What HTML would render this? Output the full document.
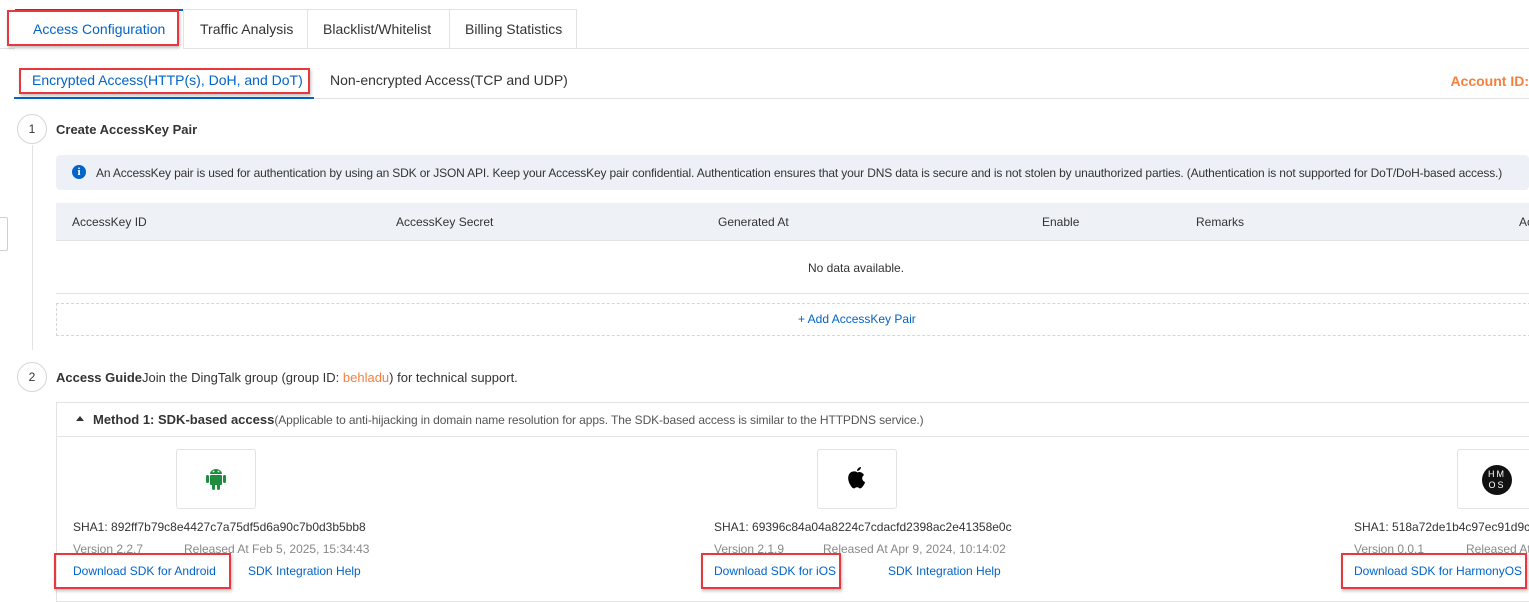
<!DOCTYPE html>
<html><head><meta charset="utf-8"><style>
*{margin:0;padding:0;box-sizing:border-box}
body{width:1529px;height:589px;overflow:hidden;background:#fff;font-family:"Liberation Sans",Arial,sans-serif;color:#333;position:relative}
.a{position:absolute;white-space:nowrap}
.red{position:absolute;border:2px solid #e8373d;box-shadow:1px 2px 3px rgba(0,0,0,.25)}
.blue{color:#0064c8}
.f12{font-size:12px}.f13{font-size:13px}
.circ{position:absolute;width:30px;height:30px;border:1px solid #d6d6d6;border-radius:50%;text-align:center;line-height:28px;font-size:12px;color:#333;background:#fff}
.ib{position:absolute;width:80px;height:60px;border:1px solid #e3e3e3;border-radius:3px}
</style></head><body>
<!-- top tabs -->
<div class="a" style="left:0;top:48px;width:1529px;height:1px;background:#e3e3e3"></div>
<div class="a" style="left:15px;top:9px;width:168px;height:40px;background:#fff;border-top:2px solid #0064c8"></div>
<div class="a" style="left:183px;top:9px;width:394px;height:39px;border:1px solid #e3e3e3;border-bottom:none"></div>
<div class="a" style="left:307px;top:9px;width:1px;height:39px;background:#e3e3e3"></div>
<div class="a" style="left:449px;top:9px;width:1px;height:39px;background:#e3e3e3"></div>
<div class="a blue" style="left:33px;top:21px;font-size:14px">Access Configuration</div>
<div class="a" style="left:200px;top:21px;font-size:14px">Traffic Analysis</div>
<div class="a" style="left:323px;top:21px;font-size:14px">Blacklist/Whitelist</div>
<div class="a" style="left:465px;top:21px;font-size:14px">Billing Statistics</div>
<div class="red" style="left:7px;top:10px;width:172px;height:36px"></div>
<!-- sub tabs -->
<div class="a" style="left:14px;top:98px;width:1515px;height:1px;background:#e3e3e3"></div>
<div class="a" style="left:14px;top:97px;width:300px;height:2px;background:#0064c8"></div>
<div class="a blue" style="left:32px;top:72px;font-size:14px">Encrypted Access(HTTP(s), DoH, and DoT)</div>
<div class="a" style="left:330px;top:72px;font-size:14px">Non-encrypted Access(TCP and UDP)</div>
<div class="red" style="left:19px;top:68px;width:291px;height:26px"></div>
<div class="a" style="right:0;top:73px;color:#f5803e;font-weight:bold;font-size:14px">Account ID:</div>
<!-- left handle -->
<div class="a" style="left:-4px;top:217px;width:12px;height:34px;border:1px solid #d0d0d0;border-radius:2px;background:#fff"></div>
<!-- step1 -->
<div class="a" style="left:32px;top:145px;width:1px;height:205px;background:#e3e3e3"></div>
<div class="circ" style="left:17px;top:114px">1</div>
<div class="a f13" style="left:56px;top:122px;font-weight:bold;color:#333">Create AccessKey Pair</div>
<div class="a" style="left:56px;top:155px;width:1473px;height:35px;background:#edf1f7;border-radius:4px"></div>
<div class="a" style="left:72px;top:165px;width:14px;height:14px;border-radius:50%;background:#0064c8;color:#fff;font-size:11px;font-weight:bold;text-align:center;line-height:14px;font-family:'Liberation Serif',serif">i</div>
<div class="a f12" style="left:96px;top:166px;letter-spacing:-0.15px">An AccessKey pair is used for authentication by using an SDK or JSON API. Keep your AccessKey pair confidential. Authentication ensures that your DNS data is secure and is not stolen by unauthorized parties. (Authentication is not supported for DoT/DoH-based access.)</div>
<div class="a" style="left:56px;top:203px;width:1473px;height:38px;background:#eef1f6;border-bottom:1px solid #e3e3e3"></div>
<div class="a f12" style="left:72px;top:215px">AccessKey ID</div>
<div class="a f12" style="left:396px;top:215px">AccessKey Secret</div>
<div class="a f12" style="left:718px;top:215px">Generated At</div>
<div class="a f12" style="left:1042px;top:215px">Enable</div>
<div class="a f12" style="left:1196px;top:215px">Remarks</div>
<div class="a f12" style="left:1519px;top:215px">Ac</div>
<div class="a f12" style="left:808px;top:261px">No data available.</div>
<div class="a" style="left:56px;top:293px;width:1473px;height:1px;background:#e3e3e3"></div>
<div class="a" style="left:56px;top:303px;width:1480px;height:33px;border:1px dashed #d6d6d6"></div>
<div class="a f12 blue" style="left:798px;top:312px">+ Add AccessKey Pair</div>
<!-- step2 -->
<div class="circ" style="left:17px;top:362px">2</div>
<div class="a f13" style="left:56px;top:370px"><b>Access Guide</b>Join the DingTalk group (group ID: <span style="color:#f5803e">behladu</span>) for technical support.</div>
<div class="a" style="left:56px;top:402px;width:1480px;height:200px;border:1px solid #e3e3e3"></div>
<div class="a" style="left:56px;top:436px;width:1473px;height:1px;background:#e3e3e3"></div>
<div class="a" style="left:76px;top:416px;width:0;height:0;border-left:4px solid transparent;border-right:4px solid transparent;border-bottom:5px solid #333"></div>
<div class="a" style="left:93px;top:411px"><b style="font-size:13px">Method 1: SDK-based access</b><span style="font-size:12px;color:#555;letter-spacing:-0.1px">(Applicable to anti-hijacking in domain name resolution for apps. The SDK-based access is similar to the HTTPDNS service.)</span></div>
<!-- icons -->
<div class="ib" style="left:176px;top:449px"></div>
<svg class="a" style="left:204px;top:466px" width="24" height="26" viewBox="0 0 24 26"><path d="M6 8a6 5 0 0 1 12 0z" fill="#1e8e3e"/><rect x="6" y="9" width="12" height="10" rx="1" fill="#1e8e3e"/><rect x="2" y="9" width="3" height="8" rx="1.5" fill="#1e8e3e"/><rect x="19" y="9" width="3" height="8" rx="1.5" fill="#1e8e3e"/><rect x="8" y="18" width="3" height="6" rx="1.5" fill="#1e8e3e"/><rect x="13" y="18" width="3" height="6" rx="1.5" fill="#1e8e3e"/><circle cx="9.5" cy="5.5" r=".9" fill="#fff"/><circle cx="14.5" cy="5.5" r=".9" fill="#fff"/></svg>
<div class="ib" style="left:817px;top:449px"></div>
<svg class="a" style="left:845px;top:464px" width="24" height="28" viewBox="0 0 24 28"><path d="M12 8c-2-1-5-1-7 1-3 3-2 9 1 13 1 2 3 3 4 2 1-1 3-1 4 0 1 1 3 0 4-2 1-1 2-3 2-4-3-1-4-5-1-7-1-2-3-3-5-3-1 0-2 1-2 0z" fill="#000"/><path d="M12 7c0-2 2-4 4-4 0 2-2 4-4 4z" fill="#000"/></svg>
<div class="ib" style="left:1457px;top:449px;width:90px"></div>
<div class="a" style="left:1482px;top:465px;width:30px;height:30px;border-radius:50%;background:#111;color:#fff;font-size:9px;line-height:11px;text-align:center;padding-top:4px;letter-spacing:2px">HM<br>OS</div>
<!-- sdk texts -->
<div class="a f12" style="left:73px;top:520px">SHA1: 892ff7b79c8e4427c7a75df5d6a90c7b0d3b5bb8</div>
<div class="a f12" style="left:73px;top:542px;color:#888">Version 2.2.7</div>
<div class="a f12" style="left:184px;top:542px;color:#888">Released At Feb 5, 2025, 15:34:43</div>
<div class="a f12 blue" style="left:73px;top:564px">Download SDK for Android</div>
<div class="a f12 blue" style="left:248px;top:564px">SDK Integration Help</div>
<div class="red" style="left:54px;top:553px;width:177px;height:36px"></div>
<div class="a f12" style="left:714px;top:520px">SHA1: 69396c84a04a8224c7cdacfd2398ac2e41358e0c</div>
<div class="a f12" style="left:714px;top:542px;color:#888">Version 2.1.9</div>
<div class="a f12" style="left:823px;top:542px;color:#888">Released At Apr 9, 2024, 10:14:02</div>
<div class="a f12 blue" style="left:714px;top:564px">Download SDK for iOS</div>
<div class="a f12 blue" style="left:888px;top:564px">SDK Integration Help</div>
<div class="red" style="left:701px;top:553px;width:140px;height:36px"></div>
<div class="a f12" style="left:1354px;top:520px">SHA1: 518a72de1b4c97ec91d9cf2</div>
<div class="a f12" style="left:1354px;top:542px;color:#888">Version 0.0.1</div>
<div class="a f12" style="left:1466px;top:542px;color:#888">Released At</div>
<div class="a f12 blue" style="left:1354px;top:564px">Download SDK for HarmonyOS</div>
<div class="red" style="left:1341px;top:553px;width:186px;height:36px"></div>
</body></html>
